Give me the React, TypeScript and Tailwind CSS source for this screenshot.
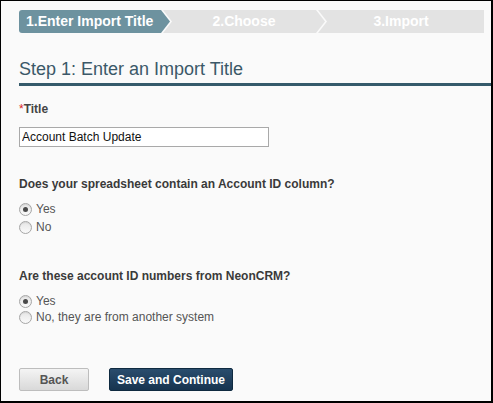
import React from 'react';

function Radio({ checked, label, tight }: { checked?: boolean; label: string; tight?: boolean }) {
  return (
    <label className={`flex items-center text-[12px] text-[#555] ${tight ? 'h-[16px]' : 'h-[18px]'}`}>
      <span className="w-[13px] h-[13px] rounded-full border border-[#a6a6a6] bg-gradient-to-b from-[#e6e6e6] to-[#fafafa] flex items-center justify-center mr-[4px] shadow-[inset_0_1px_1px_rgba(0,0,0,0.08)]">
        {checked && <span className="w-[5px] h-[5px] rounded-full bg-[#4a4a4a]" />}
      </span>
      <span>{label}</span>
    </label>
  );
}

export default function App() {
  return (
    <div
      className="w-[493px] h-[403px] bg-[#fafafa] border-l border-t border-r-2 border-b-2 border-black overflow-hidden"
      style={{ fontFamily: '"Liberation Sans", Arial, sans-serif' }}
    >
      <div className="pl-[18px] pt-[9px]">
        {/* steps */}
        <div className="flex h-[23px] w-[465px] text-[14px] font-bold text-white leading-[23px]">
          <div className="w-[151px] shrink-0 bg-[#6d929f] rounded-l-[3px] pl-[7px] [clip-path:polygon(0_0,calc(100%_-_9px)_0,100%_50%,calc(100%_-_9px)_100%,0_100%)]">
            1.Enter Import Title
          </div>
          <div className="w-[162px] shrink-0 -ml-[7px] bg-[#e3e3e3] text-center [clip-path:polygon(0_0,calc(100%_-_9px)_0,100%_50%,calc(100%_-_9px)_100%,0_100%,9px_50%)]">
            2.Choose
          </div>
          <div className="w-[166px] shrink-0 -ml-[7px] bg-[#e3e3e3] text-center [clip-path:polygon(0_0,100%_0,100%_100%,0_100%,9px_50%)]">
            3.Import
          </div>
        </div>

        <h2 className="mt-[25px] text-[18px] leading-[22px] text-[#3b5868] pb-[3px] border-b-[3px] border-[#355a6b]">
          Step 1: Enter an Import Title
        </h2>

        <div className="mt-[15px] text-[12px] font-bold leading-[16px] text-[#444]">
          <span className="text-[#d9261c] font-normal">*</span>Title
        </div>
        <input
          readOnly
          value="Account Batch Update"
          className="mt-[10px] block w-[250px] h-[20px] border border-[#a9a9a9] bg-white px-[2px] text-[12px] text-[#111] outline-none"
        />

        <div className="mt-[29px] text-[12px] font-bold leading-[16px] text-[#3a3a3a]">
          Does your spreadsheet contain an Account ID column?
        </div>
        <div className="mt-[8px] flex flex-col">
          <Radio checked label="Yes" />
          <Radio label="No" />
        </div>

        <div className="mt-[32px] text-[12px] font-bold leading-[16px] text-[#3a3a3a]">
          Are these account ID numbers from NeonCRM?
        </div>
        <div className="mt-[9px] flex flex-col">
          <Radio checked tight label="Yes" />
          <Radio tight label="No, they are from another system" />
        </div>

        <div className="mt-[43px] flex gap-[20px]">
          <button className="w-[70px] h-[23px] rounded-[2px] border border-[#bdbdbd] bg-gradient-to-b from-[#f4f4f4] to-[#d9d9d9] text-[12px] font-bold text-[#555]">
            Back
          </button>
          <button className="w-[124px] h-[23px] rounded-[2px] border border-[#0f2a40] bg-gradient-to-b from-[#2a4d6e] to-[#17344f] text-[12px] font-bold text-white">
            Save and Continue
          </button>
        </div>
      </div>
    </div>
  );
}
